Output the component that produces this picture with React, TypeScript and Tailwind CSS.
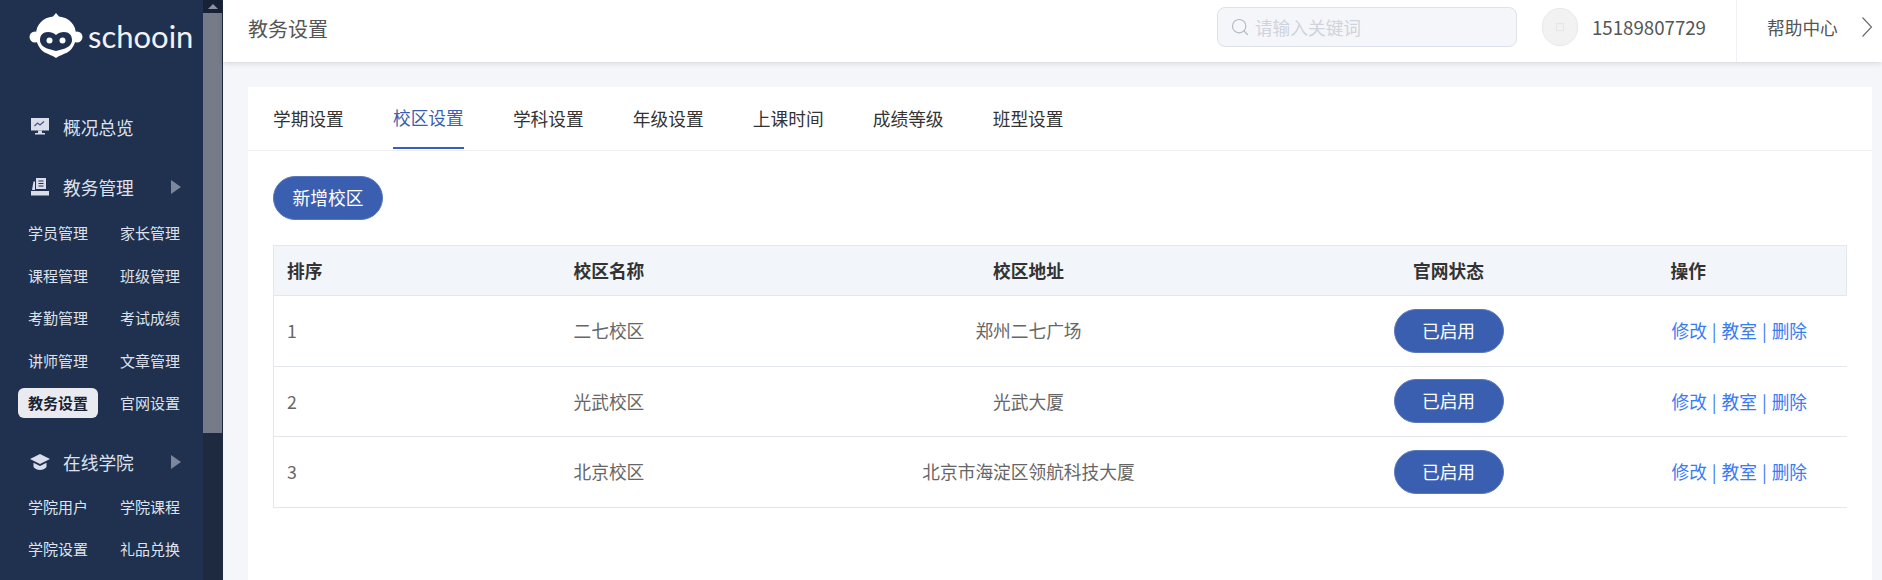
import { Search } from 'lucide-react';

const tabs = ['学期设置', '校区设置', '学科设置', '年级设置', '上课时间', '成绩等级', '班型设置'];

const campuses = [
  { id: 1, name: '二七校区', address: '郑州二七广场' },
  { id: 2, name: '光武校区', address: '光武大厦' },
  { id: 3, name: '北京校区', address: '北京市海淀区领航科技大厦' },
];

const LogoMark = () => (
  <svg width="54" height="45" viewBox="0 0 54 45">
    <circle cx="6" cy="24" r="5.500" fill="#fff" />
    <circle cx="48" cy="24" r="5.500" fill="#fff" />
    <path d="M27 0l3 3.500c10 1 17 8 17 18 0 7-2 12-6 16-3 3-9 4-14 7.500-5-3.500-11-4.500-14-7.500-4-4-6-9-6-16 0-10 7-17 17-18z" fill="#fff" />
    <path d="M27 22c2-2 5-3 8-3 5 0 8 3 8 8 0 4-3 7-7 8.500L27 38l-9-2.500c-4-1.500-7-4.500-7-8.500 0-5 3-8 8-8 3 0 6 1 8 3z" fill="#20304f" />
    <circle cx="20.500" cy="27.500" r="3" fill="#fff" />
    <circle cx="33.500" cy="27.500" r="3" fill="#fff" />
  </svg>
);

const MonitorIcon = () => (
  <svg width="20" height="20" viewBox="0 0 20 20">
    <path d="M1 1h18v12.500H1z" fill="#d9deea" />
    <path d="M4.500 9l3-3 2.500 2 4-3.500" fill="none" stroke="#4a5877" strokeWidth="1.300" />
    <path d="M8 13.500h4V16h3v1.500H5V16h3z" fill="#d9deea" />
  </svg>
);

const LedgerIcon = () => (
  <svg width="20" height="20" viewBox="0 0 20 20">
    <path d="M6 1h10v11H6z" fill="#d9deea" />
    <path d="M8.500 4h5M8.500 6.500h5M8.500 9h5" stroke="#20304f" strokeWidth="1.200" />
    <path d="M3.500 4.500H5V13H2z" fill="#d9deea" />
    <path d="M1 14h18v4.500H1z" fill="#d9deea" />
  </svg>
);

const CapIcon = () => (
  <svg width="20" height="18" viewBox="0 0 20 18">
    <path d="M10 1l10 5-10 5L0 6z" fill="#d9deea" />
    <path d="M3.500 9.800L10 13l6.500-3.200V14c-1.500 1.800-4 3-6.500 3s-5-1.200-6.500-3z" fill="#d9deea" />
  </svg>
);

const Arrow = () => (
  <span className="ml-auto mr-[22px] h-0 w-0 border-y-[7px] border-l-[10px] border-y-transparent border-l-[#7c879e]" />
);

const MenuTitle = ({ icon, label, arrow }: { icon: React.ReactNode; label: string; arrow?: boolean }) => (
  <div className="flex h-[30px] items-center pl-[30px] text-[17.700px] text-[#dde2ec]">
    <span className="flex w-[33px] shrink-0 items-center">{icon}</span>
    {label}
    {arrow && <Arrow />}
  </div>
);

const SubMenu = ({ items, active }: { items: string[]; active?: string }) => (
  <div className="grid grid-cols-[80px_80px] gap-x-3 gap-y-[12.500px] pl-[18px]">
    {items.map(item => (
      <div
        key={item}
        className={
          item === active
            ? 'flex h-[30px] items-center justify-center rounded-md bg-[#e9ebf0] text-[15px] font-semibold text-[#1a2233]'
            : 'flex h-[30px] items-center justify-center text-[15px] text-[#dde2ec]'
        }
      >
        {item}
      </div>
    ))}
  </div>
);

const Sidebar = () => (
  <aside className="flex h-[580px] w-[223px] shrink-0 overflow-hidden bg-[#1e2a40]">
    <div className="w-[203px] shrink-0 bg-[#20304f]">
      <div className="flex h-[112px] items-start pl-[29px] pt-[13px]">
        <LogoMark />
        <span className="ml-[5px] mt-[3px] font-['Lato'] text-[31px] leading-10 text-[#f1f3f7]">schooin</span>
      </div>
      <MenuTitle icon={<MonitorIcon />} label="概况总览" />
      <div className="mt-[30px] mb-[16.400px]">
        <MenuTitle icon={<LedgerIcon />} label="教务管理" arrow />
      </div>
      <SubMenu
        items={['学员管理', '家长管理', '课程管理', '班级管理', '考勤管理', '考试成绩', '讲师管理', '文章管理', '教务设置', '官网设置']}
        active="教务设置"
      />
      <div className="mt-[28.600px] mb-[15px]">
        <MenuTitle icon={<CapIcon />} label="在线学院" arrow />
      </div>
      <SubMenu items={['学院用户', '学院课程', '学院设置', '礼品兑换']} />
    </div>
    <div className="w-[19px] shrink-0">
      <div className="flex h-[13px] items-center justify-center bg-[#182236]">
        <span className="h-0 w-0 border-x-[5px] border-b-[5px] border-x-transparent border-b-[#8b93a3]" />
      </div>
      <div className="h-[420px] bg-[#757b88]" />
    </div>
  </aside>
);

const Header = () => (
  <header className="relative z-10 flex h-[62px] shrink-0 items-stretch bg-white shadow-[0_1px_6px_rgba(0,0,0,0.14)]">
    <div className="flex flex-1 items-center pb-2 pl-[25px] pr-[30px]">
      <h1 className="mt-[3px] text-[20px] font-normal text-[#555]">教务设置</h1>
      <div className="ml-auto flex h-10 w-[300px] items-center rounded-lg border border-[#dde1ea] bg-[#f5f6fa] pl-3 text-[17.700px] text-[#cfd3dc]">
        <Search size={20} strokeWidth={1.400} className="mr-[5px] text-[#b4b8c2]" />
        请输入关键词
      </div>
      <div className="ml-[25px] flex h-[38px] w-9 items-center justify-center rounded-full border border-[#e8e8e8] bg-[#f2f2f2]">
        <span className="h-2 w-2 border border-[#e6e6e6]" />
      </div>
      <span className="ml-[14px] text-[18.700px] text-[#555]">15189807729</span>
    </div>
    <div className="flex w-[146px] items-center border-l border-[#eff1f5] pb-2 pl-[30px] text-[17.700px] text-[#555]">
      帮助中心
      <svg width="12" height="22" viewBox="0 0 12 22" className="ml-[23px]">
        <path d="M1.500 1.500L10.500 11 1.500 20.500" fill="none" stroke="#666" strokeWidth="1.100" />
      </svg>
    </div>
  </header>
);

const Pill = ({ label, className }: { label: string; className?: string }) => (
  <button className={`flex h-11 w-[110px] items-center justify-center rounded-full border border-[#5a78b8] bg-[#3a5fb0] pb-px text-[17.700px] text-white ${className ?? ''}`}>
    {label}
  </button>
);

const CampusTable = () => (
  <table className="w-[1573px] table-fixed border-collapse text-[17.700px]">
    <colgroup>
      <col className="w-[286px]" />
      <col className="w-[257px]" />
      <col className="w-[424px]" />
      <col className="w-[416px]" />
      <col className="w-[190px]" />
    </colgroup>
    <thead>
      <tr className="h-[50px] border border-[#e4e7ec] bg-[#f2f5f9] font-bold text-[#333]">
        <th className="pl-[13px] text-left">排序</th>
        <th className="pl-[14px] text-left">校区名称</th>
        <th>校区地址</th>
        <th>官网状态</th>
        <th className="pl-[14px] text-left">操作</th>
      </tr>
    </thead>
    <tbody className="text-[#666]">
      {campuses.map(c => (
        <tr key={c.id} className="h-[70.500px] border-b border-[#e4e7ec]">
          <td className="border-l border-[#e4e7ec] pl-[13px]">{c.id}</td>
          <td className="pl-[14px]">{c.name}</td>
          <td className="text-center">{c.address}</td>
          <td>
            <Pill label="已启用" className="mx-auto" />
          </td>
          <td className="pl-[15px] text-[#3a7bf0] [word-spacing:1px]">修改 | 教室 | 删除</td>
        </tr>
      ))}
    </tbody>
  </table>
);

export default function App() {
  return (
    <div className="flex h-[580px] w-[1882px] overflow-hidden bg-[#f5f6fa] font-['Noto_Sans_CJK_SC',sans-serif]">
      <Sidebar />
      <main className="flex min-w-0 flex-1 flex-col">
        <Header />
        <div className="ml-[25px] mr-[10px] mt-[25px] flex-1 bg-white">
          <nav className="flex h-[64px] gap-[49.200px] border-b border-[#eceef2] px-[25px] text-[17.700px] text-[#333]">
            {tabs.map(tab => (
              <div
                key={tab}
                className={
                  tab === '校区设置'
                    ? 'flex h-[62px] items-center border-b-2 border-[#3a5fb0] text-[#3a5fb0]'
                    : 'flex h-[62px] items-center'
                }
              >
                {tab}
              </div>
            ))}
          </nav>
          <div className="px-[25px] pt-[25px]">
            <Pill label="新增校区" className="mb-[25px]" />
            <CampusTable />
          </div>
        </div>
      </main>
    </div>
  );
}
